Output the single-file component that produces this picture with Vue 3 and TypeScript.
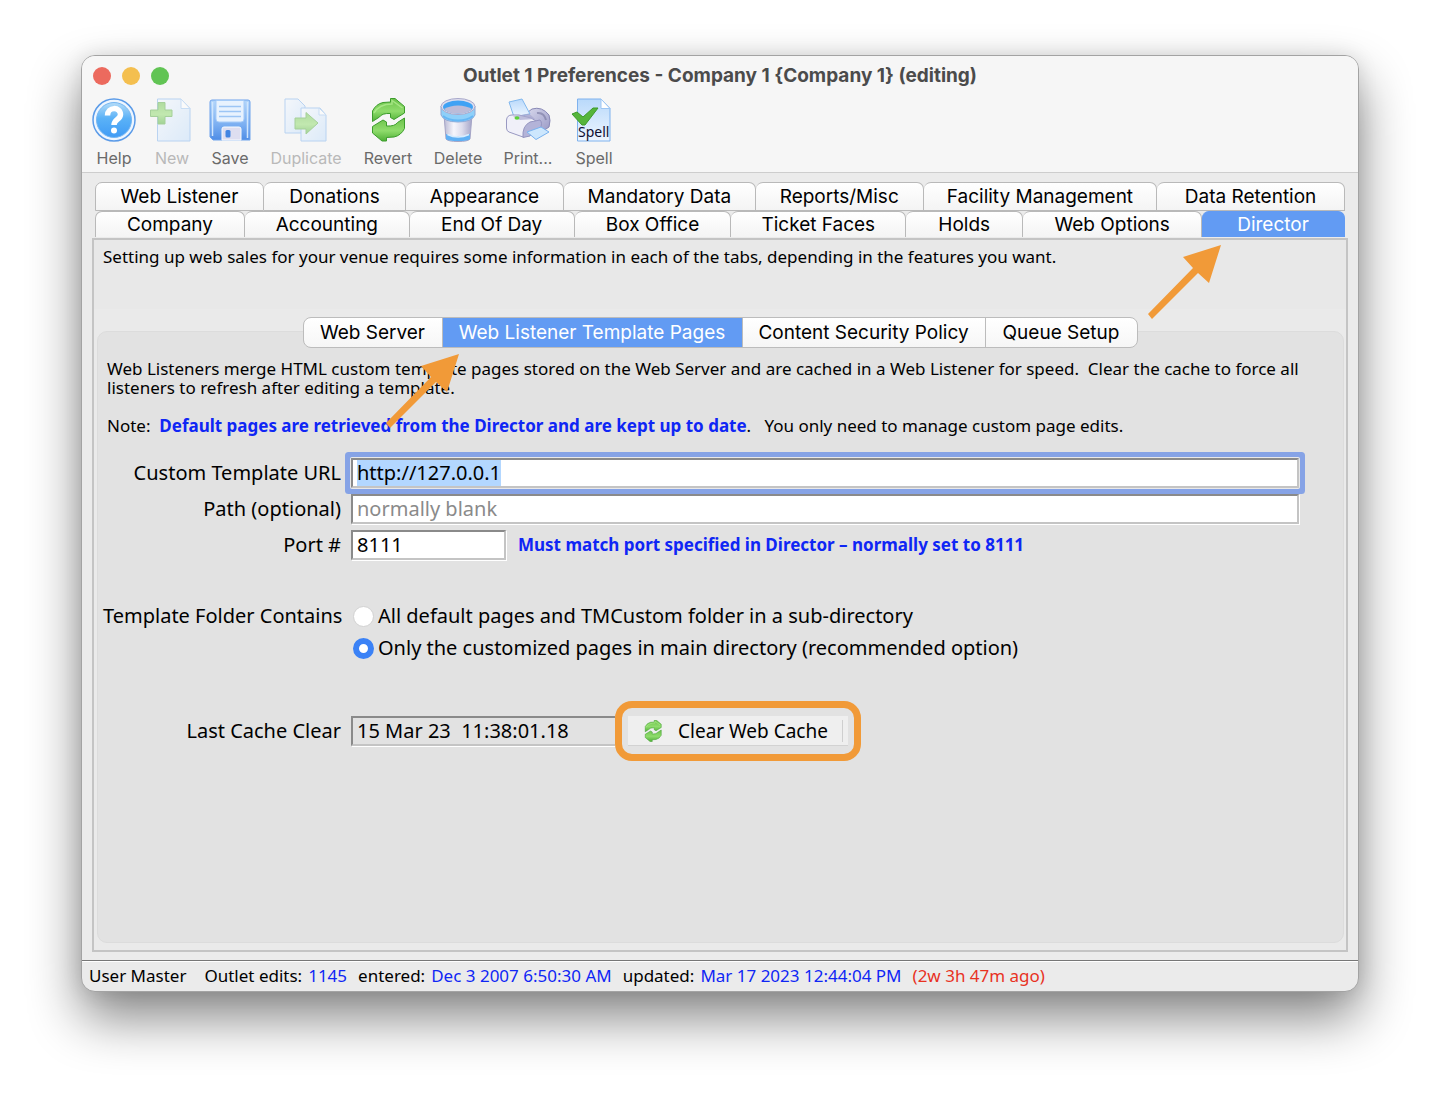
<script setup lang="ts">
import { onMounted, ref } from 'vue'

interface Tool { id: string; label: string; slot: number; disabled?: boolean }
interface Tab { label: string; span: number; active?: boolean }

const tools: Tool[] = [
  { id: 'help', label: 'Help', slot: 58 },
  { id: 'new', label: 'New', slot: 58, disabled: true },
  { id: 'save', label: 'Save', slot: 58 },
  { id: 'duplicate', label: 'Duplicate', slot: 94, disabled: true },
  { id: 'revert', label: 'Revert', slot: 70 },
  { id: 'delete', label: 'Delete', slot: 70 },
  { id: 'print', label: 'Print...', slot: 70 },
  { id: 'spell', label: 'Spell', slot: 62 },
]

const upperTabs: Tab[] = [
  { label: 'Web Listener', span: 168 },
  { label: 'Donations', span: 142 },
  { label: 'Appearance', span: 158 },
  { label: 'Mandatory Data', span: 192 },
  { label: 'Reports/Misc', span: 168 },
  { label: 'Facility Management', span: 234 },
  { label: 'Data Retention', span: 188 },
]

const lowerTabs: Tab[] = [
  { label: 'Company', span: 149 },
  { label: 'Accounting', span: 165 },
  { label: 'End Of Day', span: 165 },
  { label: 'Box Office', span: 157 },
  { label: 'Ticket Faces', span: 175 },
  { label: 'Holds', span: 117 },
  { label: 'Web Options', span: 179 },
  { label: 'Director', span: 143, active: true },
]

const sections: Tab[] = [
  { label: 'Web Server', span: 138 },
  { label: 'Web Listener Template Pages', span: 300, active: true },
  { label: 'Content Security Policy', span: 243 },
  { label: 'Queue Setup', span: 152 },
]

const url = ref('http://127.0.0.1')
const path = ref('')
const port = ref('8111')
const folder = ref('custom')
const lastClear = ref('15 Mar 23  11:38:01.18')
const urlBox = ref<HTMLInputElement | null>(null)

onMounted(() => {
  urlBox.value?.focus()
  urlBox.value?.select()
})
</script>

<template>
  <div class="desktop">
    <svg class="defs" width="0" height="0" aria-hidden="true">
      <defs>
        <linearGradient id="gBlue" x1="0" y1="0" x2="0" y2="1">
          <stop offset="0" stop-color="#b4dcf8" /><stop offset=".45" stop-color="#5bb2f7" /><stop offset="1" stop-color="#3f9bf5" />
        </linearGradient>
        <linearGradient id="gPaper" x1="0" y1="0" x2="1" y2="1">
          <stop offset="0" stop-color="#f4f9ff" /><stop offset="1" stop-color="#c3dffc" />
        </linearGradient>
        <linearGradient id="gPaperB" x1="0" y1="0" x2="0" y2="1">
          <stop offset="0" stop-color="#b9d9fb" /><stop offset="1" stop-color="#eef6ff" />
        </linearGradient>
        <linearGradient id="gDisk" x1="0" y1="0" x2="0" y2="1">
          <stop offset="0" stop-color="#b4d6fa" /><stop offset=".6" stop-color="#7db0f2" /><stop offset="1" stop-color="#4e8de6" />
        </linearGradient>
        <linearGradient id="gGreen" x1="0" y1="0" x2="0" y2="1">
          <stop offset="0" stop-color="#6cc24a" /><stop offset=".55" stop-color="#8fdc6c" /><stop offset="1" stop-color="#4fb036" />
        </linearGradient>
        <linearGradient id="gGrey" x1="0" y1="0" x2="1" y2="0">
          <stop offset="0" stop-color="#b9b9d3" /><stop offset=".35" stop-color="#f6f6fc" /><stop offset=".65" stop-color="#dcdcec" /><stop offset="1" stop-color="#a4a4c8" />
        </linearGradient>
        <linearGradient id="gBody" x1="0" y1="0" x2="1" y2="1">
          <stop offset="0" stop-color="#dcdcef" /><stop offset="1" stop-color="#9494c2" />
        </linearGradient>
        <symbol id="cycle" viewBox="0 0 44 44">
          <path d="M6.500 23.500V13Q10 6 17 4.500L24.500 4V0.500H29L38.500 8.500V15L28 21.500L24.500 19.500V15.500Q16 15 13.500 19Z" fill="url(#gGreen)" stroke="#3c9c2c" stroke-width="1" stroke-linejoin="round" />
          <path d="M38.500 20V30.500Q35 37.500 28 39L20.500 39.500V43H16L6.500 35V28.500L17 22L20.500 24V28Q29 28.500 31.500 24.500Z" fill="url(#gGreen)" stroke="#3c9c2c" stroke-width="1" stroke-linejoin="round" />
          <path d="M8 15C12 8 18 6 26 6V2.500L36.500 10" fill="none" stroke="#b6f096" stroke-width="1.500" opacity=".7" />
        </symbol>
      </defs>
    </svg>

    <main class="window">
      <header class="head">
        <div class="titlebar">
          <div class="lights">
            <button class="light red" aria-label="Close"></button>
            <button class="light yellow" aria-label="Minimize"></button>
            <button class="light green" aria-label="Zoom"></button>
          </div>
          <h1>Outlet 1 Preferences - Company 1 {Company 1} (editing)</h1>
        </div>
        <nav class="toolbar">
          <button v-for="t in tools" :key="t.id" class="tool" :disabled="t.disabled" :style="{ width: t.slot + 'px' }">
            <svg class="icon" viewBox="0 0 44 44" aria-hidden="true">
              <g v-if="t.id === 'help'">
                <circle cx="22" cy="22" r="21" fill="#eef6ff" stroke="#5b9be8" stroke-width="1.500" />
                <circle cx="22" cy="22" r="17.500" fill="url(#gBlue)" stroke="#77b7f2" />
                <path d="M15.500 17.500C15.500 8.500 28.500 8.500 28.500 16.500C28.500 21.500 22 21.500 22 27" fill="none" stroke="#fff" stroke-width="5.500" />
                <circle cx="22" cy="32.500" r="3" fill="#fff" />
              </g>
              <g v-else-if="t.id === 'new'" opacity=".5">
                <path d="M7.500 1H31L40 10.500V43H7.500Z" fill="url(#gPaper)" stroke="#7fb2ee" />
                <path d="M31 1V10.500H40Z" fill="#fff" stroke="#9cc5f3" />
                <path d="M8 4.500H15V12H22V18.500H15V26H8V18.500H0.500V12H8Z" fill="url(#gGreen)" stroke="#58ab43" />
              </g>
              <g v-else-if="t.id === 'save'">
                <path d="M4 2H40Q42 2 42 4V42H5L2 39V4Q2 2 4 2Z" fill="url(#gDisk)" stroke="#6fa3ec" />
                <path d="M4.500 4V38M39.500 4V40" stroke="#d0e5fd" stroke-width="1.500" />
                <path d="M8 2.500H36V21Q36 24 33 24H11Q8 24 8 21Z" fill="#e8f2fe" stroke="#a5cbf8" />
                <path d="M11 8.500H33M11 13.500H33M11 18.500H33" stroke="#9cc5f5" stroke-width="1.500" />
                <path d="M14 42V31Q14 29 16 29H31Q33 29 33 31V42Z" fill="#dedef0" stroke="#f7fbff" />
                <rect x="17.500" y="32" width="5" height="7.500" rx="1.500" fill="#4385e2" />
              </g>
              <g v-else-if="t.id === 'duplicate'" opacity=".5">
                <path d="M1 1H14L21 8V35H1Z" fill="url(#gPaper)" stroke="#7fb2ee" />
                <path d="M17 10H36L42 17V43H17Z" fill="url(#gPaper)" stroke="#7fb2ee" />
                <path d="M35 10V17H42Z" fill="#fff" stroke="#9cc5f3" />
                <path d="M11 20H22V14.500L34 25L22 36V31H11Z" fill="url(#gGreen)" stroke="#58ab43" />
              </g>
              <use v-else-if="t.id === 'revert'" href="#cycle" />
              <g v-else-if="t.id === 'delete'">
                <path d="M8 17H36L34 41Q32 43.500 22 43.500Q12 43.500 10 41Z" fill="url(#gGrey)" stroke="#a5a5c6" />
                <path d="M10 36Q22 41 34 36V41Q32 43 22 43Q12 43 10 41Z" fill="#5fb0f4" />
                <path d="M11.500 36.500Q22 41.500 33 36.500" fill="none" stroke="#d8ecfd" stroke-width="1.500" />
                <path d="M5 8V17Q8 24 22 24Q36 24 39 17V8Z" fill="#8fd0f9" stroke="#8fa9d6" />
                <path d="M7 18Q13 22.500 22 22.500Q31 22.500 37 18" fill="none" stroke="#66b8f5" stroke-width="2" />
                <ellipse cx="22" cy="8.500" rx="17" ry="8" fill="#dedeee" stroke="#a9a9cb" />
                <ellipse cx="22" cy="9" rx="15" ry="6.500" fill="#3fa2f4" />
                <path d="M8 11Q14 7.500 22 7.500Q30 7.500 36 11Q32 15.500 22 15.500Q12 15.500 8 11Z" fill="#bcbcd8" />
              </g>
              <g v-else-if="t.id === 'print'">
                <path d="M18 17L26 11Q36 8 43 17Q45 22 43 29L34 35L20 38Z" fill="url(#gBody)" stroke="#8888b5" />
                <path d="M31 15Q38 14 40 22" fill="none" stroke="#77779f" stroke-width="2" opacity=".6" />
                <path d="M3 4L16 1L24 16L8 19Z" fill="url(#gPaperB)" stroke="#82b8ee" />
                <path d="M0.500 22Q1 17 6 17L13 17L25 20L30 23Q19 27 17 39L3 34Q0.500 33 0.500 30Z" fill="#f0f0f9" stroke="#9999c2" />
                <path d="M17 39.500Q16 28 24 24L34 22Q37 25 34 31Q25 32 24 38Z" fill="#b3b3d8" stroke="#9494c0" />
                <path d="M7 18.500L23 15.500L29 21L14 22Z" fill="#a7a7ce" opacity=".7" />
                <path d="M21 34L35 29L43 34L30 41.500Z" fill="#cde7fd" stroke="#79b2ef" />
                <ellipse cx="11" cy="20" rx="2.500" ry="1.800" fill="#5fd23c" />
              </g>
              <g v-else>
                <path d="M5.500 1H29L38 10.500V43H5.500Z" fill="url(#gPaperB)" stroke="#7fb2ee" />
                <path d="M29 1V10.500H38Z" fill="#fff" stroke="#9cc5f3" />
                <path d="M0 16L5 14L11 19L21 10H26L13 27H10Z" fill="#55b53a" stroke="#3d9a2a" />
                <text x="6" y="39" class="spelltext">Spell</text>
              </g>
            </svg>
            <span>{{ t.label }}</span>
          </button>
        </nav>
      </header>

      <div class="tabs">
        <div class="tabrow upper" role="tablist">
          <button v-for="t in upperTabs" :key="t.label" class="tab" role="tab" :style="{ flexGrow: t.span }">{{ t.label }}</button>
        </div>
        <div class="tabrow lower" role="tablist">
          <button v-for="t in lowerTabs" :key="t.label" class="tab" :class="{ active: t.active }" role="tab" :style="{ flexGrow: t.span }">{{ t.label }}</button>
        </div>
      </div>

      <section class="panel">
        <p class="intro">Setting up web sales for your venue requires some information in each of the tabs, depending in the features you want.</p>
        <svg class="arrow arrow-tab" viewBox="0 0 76 76" aria-hidden="true">
          <path d="M75 1L63 39L52 29L6 75L2 70L47 24L37 13Z" />
        </svg>
        <div class="lowerpart">
          <div class="segments" role="tablist">
            <button v-for="s in sections" :key="s.label" class="segment" :class="{ active: s.active }" role="tab" :style="{ width: s.span + 'px' }">{{ s.label }}</button>
            <svg class="arrow arrow-segment" viewBox="0 0 76 76" aria-hidden="true">
              <path d="M75 1L63 39L52 29L6 75L2 70L47 24L37 13Z" />
            </svg>
          </div>
          <div class="group">
            <p class="help">Web Listeners merge HTML custom template pages stored on the Web Server and are cached in a Web Listener for speed.&nbsp; Clear the cache to force all listeners to refresh after editing a template.</p>
            <p class="help note">Note:&nbsp; <b>Default pages are retrieved from the Director and are kept up to date</b>.&nbsp;&nbsp; You only need to manage custom page edits.</p>

            <form class="form" @submit.prevent>
              <label for="url">Custom Template URL</label>
              <input id="url" ref="urlBox" v-model="url" class="field focused" type="text" />

              <label for="path">Path (optional)</label>
              <input id="path" v-model="path" class="field" type="text" placeholder="normally blank" />

              <label for="port">Port #</label>
              <div class="line">
                <input id="port" v-model="port" class="field port" type="text" />
                <b class="hint">Must match port specified in Director – normally set to 8111</b>
              </div>

              <span id="folder-label" class="label folder">Template Folder Contains</span>
              <div class="radios" role="radiogroup" aria-labelledby="folder-label">
                <label class="choice"><input v-model="folder" type="radio" name="folder" value="default" />All default pages and TMCustom folder in a sub-directory</label>
                <label class="choice"><input v-model="folder" type="radio" name="folder" value="custom" />Only the customized pages in main directory (recommended option)</label>
              </div>

              <label for="cache">Last Cache Clear</label>
              <div class="line cache">
                <input id="cache" v-model="lastClear" class="field readonly" type="text" readonly />
                <div class="highlight">
                  <button class="clear" type="button">
                    <svg viewBox="0 0 44 44" aria-hidden="true"><use href="#cycle" /></svg>
                    Clear Web Cache
                  </button>
                </div>
              </div>
            </form>
          </div>
        </div>
      </section>

      <footer class="status">
        <span class="user">User Master</span>
        <span>Outlet edits:</span>
        <span class="val">1145</span>
        <span class="key">entered:</span>
        <span class="val">Dec 3 2007 6:50:30 AM</span>
        <span class="key">updated:</span>
        <span class="val">Mar 17 2023 12:44:04 PM</span>
        <span class="age">(2w 3h 47m ago)</span>
      </footer>
    </main>
  </div>
</template>

<style>
body {
  background: #fff;
}
</style>

<style scoped>
* {
  box-sizing: border-box;
}
.desktop {
  display: flex;
  min-height: 100vh;
  padding: 55px 81px 107px;
  font-family: "Noto Sans", "Open Sans", sans-serif;
  color: #000;
  overflow: hidden;
}
.defs {
  position: absolute;
}
button {
  font-family: Inter, Roboto, sans-serif;
  padding: 0;
  margin: 0;
  border: 0;
  background: none;
  color: inherit;
}
p,
h1 {
  margin: 0;
}
.window {
  flex: 1;
  min-width: 0;
  display: flex;
  flex-direction: column;
  border: 1px solid #a3a3a3;
  border-radius: 14px;
  background: #ebebeb;
  box-shadow: 0 26px 52px rgba(0, 0, 0, 0.48), 0 0 20px rgba(0, 0, 0, 0.1);
}
.head {
  height: 117px;
  border-bottom: 1px solid #cdcdcd;
  border-radius: 13px 13px 0 0;
  background: #f6f6f6;
}
.titlebar {
  position: relative;
  display: flex;
  align-items: center;
  justify-content: center;
  height: 39px;
}
.lights {
  position: absolute;
  left: 11px;
  display: flex;
  gap: 11px;
}
.light {
  width: 18px;
  height: 18px;
  border-radius: 50%;
}
.red {
  background: #ec6a5e;
}
.yellow {
  background: #f4bf4f;
}
.green {
  background: #61c454;
}
h1 {
  font: 700 19px/24px Inter, sans-serif;
  color: #4b4b4b;
}
.toolbar {
  display: flex;
  padding: 3px 3px 0;
}
.tool {
  display: flex;
  flex-direction: column;
  align-items: center;
  gap: 6px;
  font-size: 16px;
  line-height: 20px;
  color: #6a6a6a;
}
.tool:disabled {
  color: #b9b9b9;
}
.icon {
  width: 44px;
  height: 44px;
  overflow: visible;
}
.spelltext {
  font: 14px "Noto Sans", sans-serif;
  fill: #101030;
}
.tabs {
  margin: 9px 13px 0;
}
.tabrow {
  display: flex;
}
.upper {
  height: 29px;
}
.lower {
  height: 26px;
}
.tab {
  flex: 1 1 0;
  font-size: 19px;
  line-height: 26px;
  white-space: nowrap;
  border: 1px solid #b9b9b9;
  border-left-width: 0;
  border-radius: 7px 7px 0 0;
  background: linear-gradient(#fff, #f4f4f4);
}
.tab:first-child {
  border-left-width: 1px;
}
.lower .tab {
  line-height: 24px;
  border-bottom: 0;
}
.lower .tab.active {
  background: #629bf3;
  border-color: #629bf3;
  color: #fff;
}
.panel {
  position: relative;
  flex: 1;
  display: flex;
  flex-direction: column;
  margin: 1px 10px 8px;
  border: 2px solid #c4c4c4;
  background: #e8e8e8;
}
.intro {
  height: 69px;
  padding: 7px 9px 0;
  font-size: 17px;
  line-height: 19px;
}
.lowerpart {
  flex: 1;
  display: flex;
  flex-direction: column;
  padding: 8px 2px 7px 3px;
  background: #eaeaea;
}
.segments {
  position: relative;
  z-index: 1;
  align-self: center;
  display: flex;
  height: 31px;
  margin-right: 1px;
  margin-bottom: -17px;
  border: 1px solid #bcbcbc;
  border-radius: 8px;
  background: linear-gradient(#fff, #f6f6f6);
}
.segment {
  font-size: 19px;
  line-height: 28px;
  white-space: nowrap;
  border-left: 1px solid #bcbcbc;
}
.segment:first-child {
  border-left: 0;
}
.segment.active {
  background: #629bf3;
  color: #fff;
}
.arrow {
  position: absolute;
  width: 76px;
  height: 76px;
  fill: #f19a38;
  z-index: 2;
}
.arrow-tab {
  top: 4px;
  right: 124px;
}
.arrow-segment {
  top: 35px;
  left: 80px;
}
.group {
  flex: 1;
  padding: 27px 24px 0 5px;
  border: 1px solid #dcdcdc;
  border-radius: 10px;
  background: #e2e2e2;
}
.help {
  padding-left: 4px;
  font-size: 17px;
  line-height: 19px;
}
.note {
  margin-top: 19px;
}
b {
  color: #0f26f5;
}
.form {
  display: grid;
  grid-template-columns: 238px minmax(0, 1fr);
  column-gap: 10px;
  row-gap: 6px;
  align-items: center;
  margin: 23px 20px 0 0;
  font-size: 20px;
  line-height: 24px;
}
.form > label,
.label {
  text-align: right;
  white-space: nowrap;
}
.field {
  width: 100%;
  height: 30px;
  padding: 0 4px 1px;
  border: 2px solid;
  border-color: #8a8a8a #c4c4c4 #c4c4c4 #8a8a8a;
  border-radius: 0;
  background: #fff;
  box-shadow: 1px 1px 0 #fff;
  color: #000;
  font: 20px/22px "Noto Sans", "Open Sans", sans-serif;
  outline: 0;
}
.field::placeholder {
  color: #8a8a8a;
  opacity: 1;
}
.field::selection {
  background: #b3d7ff;
  color: #000;
}
.focused {
  position: relative;
  border-radius: 1px;
  box-shadow: 0 0 0 1px #e8e8e8, 0 0 0 6px #86a3e6;
}
.line {
  display: flex;
  align-items: center;
}
.port {
  width: 155px;
}
.hint {
  margin-left: 12px;
  font-size: 17px;
}
.folder {
  align-self: start;
  margin-top: 38px;
}
.radios {
  display: flex;
  flex-direction: column;
  gap: 8px;
  margin-top: 38px;
}
.choice {
  display: flex;
  align-items: center;
  gap: 4px;
  padding-left: 2px;
}
.choice input {
  appearance: none;
  width: 21px;
  height: 21px;
  margin: 0;
  border: 1px solid #d2d2d2;
  border-radius: 50%;
  background: #fff;
}
.choice input:checked {
  border: 6px solid #3b82f6;
}
.form > label[for="cache"],
.cache {
  margin-top: 35px;
}
.form .readonly {
  width: 264px;
  border-right-width: 0;
  background: transparent;
}
.highlight {
  padding: 8px 6px;
  border: 7px solid #f19a38;
  border-radius: 17px;
}
.clear {
  display: flex;
  align-items: center;
  gap: 14px;
  width: 220px;
  height: 30px;
  padding-left: 14px;
  background: #efefef;
  border-bottom: 1px solid #d2d2d2;
  font: 19px/24px "Noto Sans", "Open Sans", sans-serif;
  white-space: nowrap;
}
.clear::after {
  content: "";
  height: 22px;
  border-right: 1px solid #cfcfcf;
}
.clear svg {
  width: 22px;
  height: 22px;
}
.status {
  display: flex;
  height: 31px;
  padding: 0 7px;
  border-top: 1px solid #777;
  box-shadow: inset 0 1px 0 #fff;
  font-size: 17px;
  line-height: 30px;
  white-space: nowrap;
  border-radius: 0 0 13px 13px;
}
.user {
  margin-right: 18px;
}
.key {
  margin-left: 11px;
}
.val {
  margin-left: 6px;
  color: #0f26f5;
}
.age {
  margin-left: 11px;
  color: #e8321f;
}
</style>
